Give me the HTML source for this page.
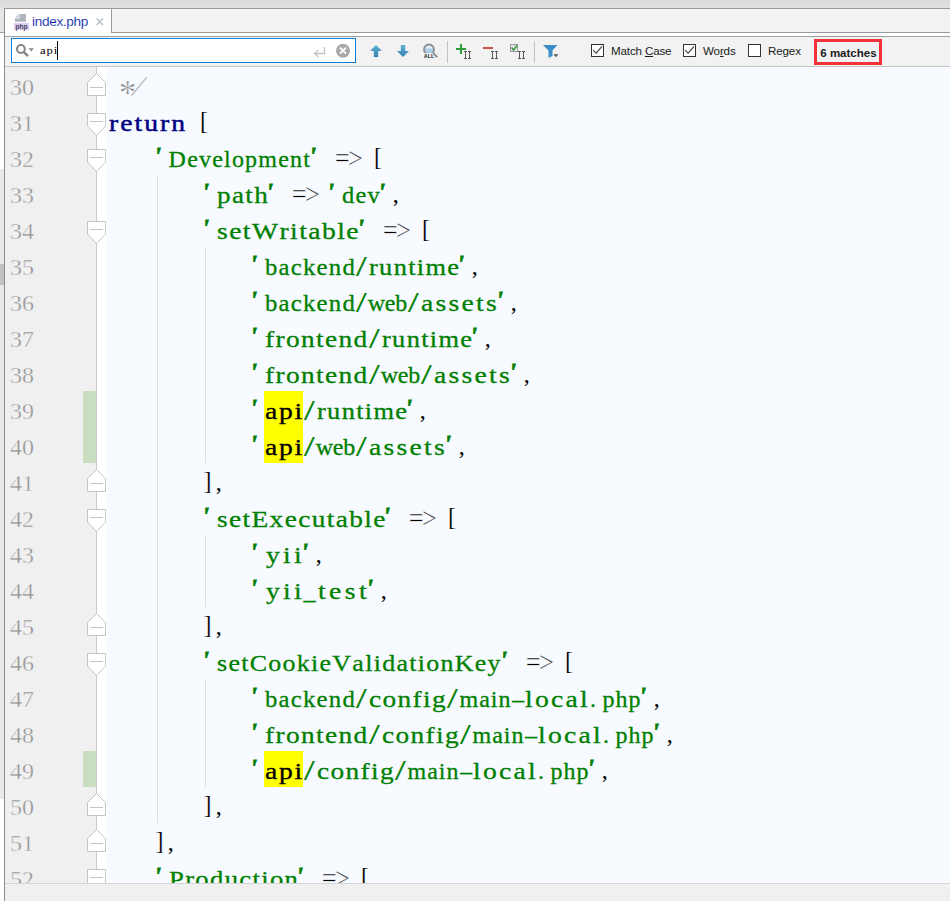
<!DOCTYPE html>
<html lang="en">
<head>
<meta charset="utf-8">
<title>index.php</title>
<style>
html,body{margin:0;padding:0;}
body{width:950px;height:901px;position:relative;overflow:hidden;background:#f7faff;font-family:"Liberation Sans",sans-serif;}
.abs{position:absolute;}
/* top chrome */
#topstrip{left:0;top:0;width:950px;height:8px;background:linear-gradient(#d9d9d9,#e0e0e0);}
#topline{left:4px;top:8px;width:946px;height:1px;background:#9b9b9b;}
#tabrow{left:5px;top:9px;width:945px;height:23px;background:#f2f2f2;}
#leftcol-top{left:0;top:8px;width:4px;height:24px;background:#e6e6e6;}
#leftcol-line{left:0;top:32px;width:4px;height:1px;background:#9b9b9b;}
#leftcol{left:0;top:33px;width:4px;height:868px;background:#ffffff;}
#leftgray{left:0;top:169px;width:4px;height:630px;background:#e8e8e8;}
#leftthumb{left:0;top:264px;width:4px;height:21px;background:#c2c2c2;}
#vline{left:4px;top:8px;width:1px;height:893px;background:#8c8c8c;}
#tab{left:5px;top:9px;width:106px;height:27px;background:#ffffff;}
#tabright{left:111px;top:8px;width:1px;height:25px;background:#9b9b9b;}
#tabline{left:111px;top:32px;width:839px;height:1px;background:#9b9b9b;}
#tabstrip{left:5px;top:33px;width:945px;height:3px;background:#ffffff;}
#tabline2{left:5px;top:36px;width:945px;height:1px;background:#a0a0a0;}
#tabtext{left:32px;top:12px;font-size:13.6px;letter-spacing:-0.33px;-webkit-text-stroke:0.12px #ffffff;line-height:20px;color:#0a1ea8;white-space:nowrap;}
/* search bar */
#searchbar{left:5px;top:37px;width:945px;height:29px;background:#f2f2f2;}
#searchline{left:5px;top:66px;width:945px;height:1px;background:#c6c6c6;}
#field{left:11px;top:38px;width:343px;height:23px;border:1px solid #0d7fd8;background:#fff;}
#query{left:40px;top:43px;font-family:"Liberation Serif",serif;font-size:11px;line-height:14px;letter-spacing:0.74px;transform:scaleX(1.15);transform-origin:0 0;color:#000;white-space:nowrap;font-kerning:none;}
#caret{left:57px;top:41px;width:1px;height:19px;background:#000;}
.sep{top:41px;width:1px;height:22px;background:#c3c3c3;}
.cb{top:44px;width:11px;height:11px;border:1px solid #333;background:#fff;}
.lbl{top:43px;font-size:11.6px;letter-spacing:-0.15px;line-height:16px;color:#1a1a1a;white-space:nowrap;}
.lbl u{text-decoration:underline;text-underline-offset:1px;}
#matches{left:814px;top:39px;width:62px;height:20px;border:3px solid #f4303a;}
#matchtext{left:820.3px;top:45px;font-size:11.5px;line-height:16px;font-weight:bold;color:#1a1a1a;white-space:nowrap;}
/* editor */
#gutter{left:5px;top:67px;width:91px;height:816px;background:#f0f0f0;}
#foldstrip{left:96px;top:67px;width:11px;height:816px;background:#ffffff;}
#foldline{left:96px;top:67px;width:1px;height:816px;background:#c9c9c9;}
#code{left:107px;top:67px;width:843px;height:816px;background:#f7faff;}
.num{position:absolute;left:10px;-webkit-text-stroke:0.45px #f0f0f0;margin-top:2px;width:40px;height:36px;line-height:36px;font-family:"Liberation Serif",serif;font-size:24px;color:#8e8e8e;white-space:pre;}
.vcs{position:absolute;left:83px;width:13px;background:#c9dec1;}
.guide{position:absolute;width:1px;background:#dddee1;}
.ln{position:absolute;left:108px;width:842px;height:36px;line-height:36px;font-family:"Liberation Serif",serif;font-size:24px;white-space:pre;font-kerning:none;font-variant-ligatures:none;}
.s{display:inline-block;height:36px;vertical-align:top;overflow:hidden;}
.t{display:inline-block;position:relative;top:2px;height:36px;line-height:36px;vertical-align:top;white-space:pre;}
.st{color:#008000;-webkit-text-stroke:0.3px #008000;}
.kw{color:#000080;-webkit-text-stroke:0.45px #000080;}
.hl{color:#000000;-webkit-text-stroke:0.35px #000000;}
.q{top:-2px;font-weight:bold;font-style:italic;-webkit-text-stroke-width:0.85px;}
.sl{transform:scale(1.6,1.22);transform-origin:3.3px 62%;-webkit-text-stroke-width:0.2px;}
.ast{top:8px;transform:scale(1.45,1.45);transform-origin:6px 50%;-webkit-text-stroke:0.5px #f7faff;}
.w{transform-origin:0 0;}
.cm.sl{transform:scale(1.9,1.25);-webkit-text-stroke:0.55px #f7faff;}
.op{color:#000000;}
.br{top:-0.5px;transform:scale(1,1.07);transform-origin:50% 60%;-webkit-text-stroke:0.12px #f7faff;}
.cma{top:1px;}
.hy{transform:scale(1.9,0.75);transform-origin:4px 62%;}
.ar{margin-left:0.3px;margin-right:-0.3px;transform:scale(1.1,1.25);transform-origin:50% 56%;-webkit-text-stroke:0.4px #f7faff;}
.cm{color:#858585;font-style:italic;-webkit-text-stroke:0.3px #f7faff;}
.hlbg{display:inline-block;height:36px;vertical-align:top;background:#ffff00;}
#bottomline{left:5px;top:883px;width:945px;height:1px;background:#d4d4d4;}
#bottombar{left:5px;top:884px;width:945px;height:17px;background:#f0f0f0;}
svg{position:absolute;left:0;top:0;overflow:visible;}
</style>
</head>
<body>
<!-- editor area -->
<div id="code" class="abs"></div>
<div id="gutter" class="abs"></div>
<div id="foldstrip" class="abs"></div>
<div class="vcs" style="top:391px;height:72px"></div>
<div class="vcs" style="top:751px;height:36px"></div>
<div id="foldline" class="abs"></div>
<div class="guide" style="left:157px;top:175px;height:648px"></div>
<div class="guide" style="left:205px;top:247px;height:216px"></div>
<div class="guide" style="left:205px;top:535px;height:72px"></div>
<div class="guide" style="left:205px;top:679px;height:108px"></div>
<div class="num" style="top:67px">30</div>
<div class="num" style="top:103px">31</div>
<div class="num" style="top:139px">32</div>
<div class="num" style="top:175px">33</div>
<div class="num" style="top:211px">34</div>
<div class="num" style="top:247px">35</div>
<div class="num" style="top:283px">36</div>
<div class="num" style="top:319px">37</div>
<div class="num" style="top:355px">38</div>
<div class="num" style="top:391px">39</div>
<div class="num" style="top:427px">40</div>
<div class="num" style="top:463px">41</div>
<div class="num" style="top:499px">42</div>
<div class="num" style="top:535px">43</div>
<div class="num" style="top:571px">44</div>
<div class="num" style="top:607px">45</div>
<div class="num" style="top:643px">46</div>
<div class="num" style="top:679px">47</div>
<div class="num" style="top:715px">48</div>
<div class="num" style="top:751px">49</div>
<div class="num" style="top:787px">50</div>
<div class="num" style="top:823px">51</div>
<div class="num" style="top:859px">52</div>
<svg width="950" height="901" viewBox="0 0 950 901" fill="#ffffff" stroke="#c4c4c4" stroke-width="1">
<path d="M96.5 73.5L105.5 82.5V95.5H87.5V82.5Z"/><path d="M90 87.5H103"/>
<path d="M87.5 113.5H105.5V126L96.5 135.5L87.5 126Z"/><path d="M90 121.5H103"/>
<path d="M87.5 149.5H105.5V162L96.5 171.5L87.5 162Z"/><path d="M90 157.5H103"/>
<path d="M87.5 221.5H105.5V234L96.5 243.5L87.5 234Z"/><path d="M90 229.5H103"/>
<path d="M96.5 469.5L105.5 478.5V491.5H87.5V478.5Z"/><path d="M90 483.5H103"/>
<path d="M87.5 509.5H105.5V522L96.5 531.5L87.5 522Z"/><path d="M90 517.5H103"/>
<path d="M96.5 613.5L105.5 622.5V635.5H87.5V622.5Z"/><path d="M90 627.5H103"/>
<path d="M87.5 653.5H105.5V666L96.5 675.5L87.5 666Z"/><path d="M90 661.5H103"/>
<path d="M96.5 793.5L105.5 802.5V815.5H87.5V802.5Z"/><path d="M90 807.5H103"/>
<path d="M96.5 829.5L105.5 838.5V851.5H87.5V838.5Z"/><path d="M90 843.5H103"/>
<path d="M87.5 869.5H105.5V882L96.5 891.5L87.5 882Z"/><path d="M90 877.5H103"/>
</svg>
<div class="ln" style="top:67px"><span class="s" style="width:12px"> </span><span class="t cm ast" style="width:12px;left:0px">*</span><span class="t cm sl" style="width:12px;left:2.67px">/</span></div>
<div class="ln" style="top:103px"><span class="t w kw" style="width:78px;left:1.01px;letter-spacing:1.75px;transform:scaleX(1.15)">return</span><span class="s" style="width:12px"> </span><span class="t op br" style="width:12px;left:2px">[</span></div>
<div class="ln" style="top:139px"><span class="s" style="width:48px">    </span><span class="t st q" style="width:12px;left:-1.8px">'</span><span class="t w st" style="width:143px;left:0.6px;letter-spacing:1.2px;transform:scaleX(1)">Development</span><span class="t st q" style="width:13px;left:-1.8px">'</span><span class="s" style="width:12px"> </span><span class="t ar op" style="width:24px;left:-0.77px;letter-spacing:-1.54px">=&gt;</span><span class="s" style="width:12px"> </span><span class="t op br" style="width:12px;left:2px">[</span></div>
<div class="ln" style="top:175px"><span class="s" style="width:96px">        </span><span class="t st q" style="width:12px;left:-1.8px">'</span><span class="t w st" style="width:52px;left:0.68px;letter-spacing:1.2px;transform:scaleX(1.13)">path</span><span class="t st q" style="width:13px;left:-1.8px">'</span><span class="s" style="width:12px"> </span><span class="t ar op" style="width:24px;left:-0.77px;letter-spacing:-1.54px">=&gt;</span><span class="s" style="width:12px"> </span><span class="t st q" style="width:12px;left:-1.8px">'</span><span class="t w st" style="width:39px;left:0.61px;letter-spacing:1.2px;transform:scaleX(1.02)">dev</span><span class="t st q" style="width:13px;left:-1.8px">'</span><span class="t op cma" style="width:12px;left:-0.3px">,</span></div>
<div class="ln" style="top:211px"><span class="s" style="width:96px">        </span><span class="t st q" style="width:12px;left:-1.8px">'</span><span class="t w st" style="width:143px;left:0.72px;letter-spacing:1.25px;transform:scaleX(1.15)">setWritable</span><span class="t st q" style="width:13px;left:-1.8px">'</span><span class="s" style="width:12px"> </span><span class="t ar op" style="width:24px;left:-0.77px;letter-spacing:-1.54px">=&gt;</span><span class="s" style="width:12px"> </span><span class="t op br" style="width:12px;left:2px">[</span></div>
<div class="ln" style="top:247px"><span class="s" style="width:144px">            </span><span class="t st q" style="width:12px;left:-1.8px">'</span><span class="t w st" style="width:91px;left:0.62px;letter-spacing:1.2px;transform:scaleX(1.03)">backend</span><span class="t st sl" style="width:13px;left:3.17px">/</span><span class="t w st" style="width:91px;left:0.66px;letter-spacing:1.2px;transform:scaleX(1.1)">runtime</span><span class="t st q" style="width:13px;left:-1.8px">'</span><span class="t op cma" style="width:12px;left:-0.3px">,</span></div>
<div class="ln" style="top:283px"><span class="s" style="width:144px">            </span><span class="t st q" style="width:12px;left:-1.8px">'</span><span class="t w st" style="width:91px;left:0.62px;letter-spacing:1.2px;transform:scaleX(1.03)">backend</span><span class="t st sl" style="width:13px;left:3.17px">/</span><span class="t w st" style="width:39px;left:-0.16px;letter-spacing:-0.33px">web</span><span class="t st sl" style="width:13px;left:3.17px">/</span><span class="t w st" style="width:78px;left:1.13px;letter-spacing:1.97px;transform:scaleX(1.15)">assets</span><span class="t st q" style="width:13px;left:-1.8px">'</span><span class="t op cma" style="width:12px;left:-0.3px">,</span></div>
<div class="ln" style="top:319px"><span class="s" style="width:144px">            </span><span class="t st q" style="width:12px;left:-1.8px">'</span><span class="t w st" style="width:104px;left:0.69px;letter-spacing:1.2px;transform:scaleX(1.14)">frontend</span><span class="t st sl" style="width:13px;left:3.17px">/</span><span class="t w st" style="width:91px;left:0.66px;letter-spacing:1.2px;transform:scaleX(1.1)">runtime</span><span class="t st q" style="width:13px;left:-1.8px">'</span><span class="t op cma" style="width:12px;left:-0.3px">,</span></div>
<div class="ln" style="top:355px"><span class="s" style="width:144px">            </span><span class="t st q" style="width:12px;left:-1.8px">'</span><span class="t w st" style="width:104px;left:0.69px;letter-spacing:1.2px;transform:scaleX(1.14)">frontend</span><span class="t st sl" style="width:13px;left:3.17px">/</span><span class="t w st" style="width:39px;left:-0.16px;letter-spacing:-0.33px">web</span><span class="t st sl" style="width:13px;left:3.17px">/</span><span class="t w st" style="width:78px;left:1.13px;letter-spacing:1.97px;transform:scaleX(1.15)">assets</span><span class="t st q" style="width:13px;left:-1.8px">'</span><span class="t op cma" style="width:12px;left:-0.3px">,</span></div>
<div class="ln" style="top:391px"><span class="s" style="width:144px">            </span><span class="t st q" style="width:12px;left:-1.8px">'</span><span class="hlbg" style="width:39px"><span class="t w hl" style="width:39px;left:0.88px;letter-spacing:1.53px;transform:scaleX(1.15)">api</span></span><span class="t st sl" style="width:13px;left:3.17px">/</span><span class="t w st" style="width:91px;left:0.66px;letter-spacing:1.2px;transform:scaleX(1.1)">runtime</span><span class="t st q" style="width:13px;left:-1.8px">'</span><span class="t op cma" style="width:12px;left:-0.3px">,</span></div>
<div class="ln" style="top:427px"><span class="s" style="width:144px">            </span><span class="t st q" style="width:12px;left:-1.8px">'</span><span class="hlbg" style="width:39px"><span class="t w hl" style="width:39px;left:0.88px;letter-spacing:1.53px;transform:scaleX(1.15)">api</span></span><span class="t st sl" style="width:13px;left:3.17px">/</span><span class="t w st" style="width:39px;left:-0.16px;letter-spacing:-0.33px">web</span><span class="t st sl" style="width:13px;left:3.17px">/</span><span class="t w st" style="width:78px;left:1.13px;letter-spacing:1.97px;transform:scaleX(1.15)">assets</span><span class="t st q" style="width:13px;left:-1.8px">'</span><span class="t op cma" style="width:12px;left:-0.3px">,</span></div>
<div class="ln" style="top:463px"><span class="s" style="width:96px">        </span><span class="t op br" style="width:12px;left:-0.5px">]</span><span class="t op cma" style="width:12px;left:-0.3px">,</span></div>
<div class="ln" style="top:499px"><span class="s" style="width:96px">        </span><span class="t st q" style="width:12px;left:-1.8px">'</span><span class="t w st" style="width:169px;left:0.68px;letter-spacing:1.2px;transform:scaleX(1.14)">setExecutable</span><span class="t st q" style="width:13px;left:-1.8px">'</span><span class="s" style="width:12px"> </span><span class="t ar op" style="width:24px;left:-0.77px;letter-spacing:-1.54px">=&gt;</span><span class="s" style="width:12px"> </span><span class="t op br" style="width:12px;left:2px">[</span></div>
<div class="ln" style="top:535px"><span class="s" style="width:144px">            </span><span class="t st q" style="width:12px;left:-1.8px">'</span><span class="t w st" style="width:39px;left:1.64px;letter-spacing:2.86px;transform:scaleX(1.15)">yii</span><span class="t st q" style="width:13px;left:-1.8px">'</span><span class="t op cma" style="width:12px;left:-0.3px">,</span></div>
<div class="ln" style="top:571px"><span class="s" style="width:144px">            </span><span class="t st q" style="width:12px;left:-1.8px">'</span><span class="t w st" style="width:39px;left:1.64px;letter-spacing:2.86px;transform:scaleX(1.15)">yii</span><span class="t st" style="width:13px;left:0.5px">_</span><span class="t w st" style="width:52px;left:1.71px;letter-spacing:2.97px;transform:scaleX(1.15)">test</span><span class="t st q" style="width:13px;left:-1.8px">'</span><span class="t op cma" style="width:12px;left:-0.3px">,</span></div>
<div class="ln" style="top:607px"><span class="s" style="width:96px">        </span><span class="t op br" style="width:12px;left:-0.5px">]</span><span class="t op cma" style="width:12px;left:-0.3px">,</span></div>
<div class="ln" style="top:643px"><span class="s" style="width:96px">        </span><span class="t st q" style="width:12px;left:-1.8px">'</span><span class="t w st" style="width:286px;left:0.65px;letter-spacing:1.2px;transform:scaleX(1.08)">setCookieValidationKey</span><span class="t st q" style="width:13px;left:-1.8px">'</span><span class="s" style="width:12px"> </span><span class="t ar op" style="width:24px;left:-0.77px;letter-spacing:-1.54px">=&gt;</span><span class="s" style="width:12px"> </span><span class="t op br" style="width:12px;left:2px">[</span></div>
<div class="ln" style="top:679px"><span class="s" style="width:144px">            </span><span class="t st q" style="width:12px;left:-1.8px">'</span><span class="t w st" style="width:91px;left:0.62px;letter-spacing:1.2px;transform:scaleX(1.03)">backend</span><span class="t st sl" style="width:13px;left:3.17px">/</span><span class="t w st" style="width:78px;left:0.68px;letter-spacing:1.2px;transform:scaleX(1.14)">config</span><span class="t st sl" style="width:13px;left:3.17px">/</span><span class="t w st" style="width:52px;left:0.5px;letter-spacing:1px">main</span><span class="t st hy" style="width:13px;left:2.5px">-</span><span class="t w st" style="width:65px;left:1.14px;letter-spacing:1.98px;transform:scaleX(1.15)">local</span><span class="t st" style="width:13px;left:1px">.</span><span class="t w st" style="width:39px;left:0.5px;letter-spacing:1px">php</span><span class="t st q" style="width:13px;left:-1.8px">'</span><span class="t op cma" style="width:12px;left:-0.3px">,</span></div>
<div class="ln" style="top:715px"><span class="s" style="width:144px">            </span><span class="t st q" style="width:12px;left:-1.8px">'</span><span class="t w st" style="width:104px;left:0.69px;letter-spacing:1.2px;transform:scaleX(1.14)">frontend</span><span class="t st sl" style="width:13px;left:3.17px">/</span><span class="t w st" style="width:78px;left:0.68px;letter-spacing:1.2px;transform:scaleX(1.14)">config</span><span class="t st sl" style="width:13px;left:3.17px">/</span><span class="t w st" style="width:52px;left:0.5px;letter-spacing:1px">main</span><span class="t st hy" style="width:13px;left:2.5px">-</span><span class="t w st" style="width:65px;left:1.14px;letter-spacing:1.98px;transform:scaleX(1.15)">local</span><span class="t st" style="width:13px;left:1px">.</span><span class="t w st" style="width:39px;left:0.5px;letter-spacing:1px">php</span><span class="t st q" style="width:13px;left:-1.8px">'</span><span class="t op cma" style="width:12px;left:-0.3px">,</span></div>
<div class="ln" style="top:751px"><span class="s" style="width:144px">            </span><span class="t st q" style="width:12px;left:-1.8px">'</span><span class="hlbg" style="width:39px"><span class="t w hl" style="width:39px;left:0.88px;letter-spacing:1.53px;transform:scaleX(1.15)">api</span></span><span class="t st sl" style="width:13px;left:3.17px">/</span><span class="t w st" style="width:78px;left:0.68px;letter-spacing:1.2px;transform:scaleX(1.14)">config</span><span class="t st sl" style="width:13px;left:3.17px">/</span><span class="t w st" style="width:52px;left:0.5px;letter-spacing:1px">main</span><span class="t st hy" style="width:13px;left:2.5px">-</span><span class="t w st" style="width:65px;left:1.14px;letter-spacing:1.98px;transform:scaleX(1.15)">local</span><span class="t st" style="width:13px;left:1px">.</span><span class="t w st" style="width:39px;left:0.5px;letter-spacing:1px">php</span><span class="t st q" style="width:13px;left:-1.8px">'</span><span class="t op cma" style="width:12px;left:-0.3px">,</span></div>
<div class="ln" style="top:787px"><span class="s" style="width:96px">        </span><span class="t op br" style="width:12px;left:-0.5px">]</span><span class="t op cma" style="width:12px;left:-0.3px">,</span></div>
<div class="ln" style="top:823px"><span class="s" style="width:48px">    </span><span class="t op br" style="width:12px;left:-0.5px">]</span><span class="t op cma" style="width:12px;left:-0.3px">,</span></div>
<div class="ln" style="top:859px"><span class="s" style="width:48px">    </span><span class="t st q" style="width:12px;left:-1.8px">'</span><span class="t w st" style="width:130px;left:0.66px;letter-spacing:1.2px;transform:scaleX(1.11)">Production</span><span class="t st q" style="width:13px;left:-1.8px">'</span><span class="s" style="width:12px"> </span><span class="t ar op" style="width:24px;left:-0.77px;letter-spacing:-1.54px">=&gt;</span><span class="s" style="width:12px"> </span><span class="t op br" style="width:12px;left:2px">[</span></div>
<div id="bottomline" class="abs"></div>
<div id="bottombar" class="abs"></div>

<!-- top chrome -->
<div id="topstrip" class="abs"></div>
<div id="tabrow" class="abs"></div>
<div id="leftcol-top" class="abs"></div>
<div id="leftcol" class="abs"></div>
<div id="leftgray" class="abs"></div>
<div id="leftcol-line" class="abs"></div>
<div id="leftthumb" class="abs"></div>
<div id="topline" class="abs"></div>
<div id="tab" class="abs"></div>
<div id="tabstrip" class="abs"></div>
<div id="tabright" class="abs"></div>
<div id="tabline" class="abs"></div>
<div id="tabline2" class="abs"></div>
<div id="vline" class="abs"></div>
<div id="tabtext" class="abs">index.php</div>

<div id="searchbar" class="abs"></div>
<div id="searchline" class="abs"></div>
<div id="field" class="abs"></div>
<div id="query" class="abs">api</div>
<div id="caret" class="abs"></div>
<div class="abs sep" style="left:447px"></div>
<div class="abs sep" style="left:534px"></div>
<div class="abs cb" style="left:591px"></div>
<div class="abs lbl" style="left:611px">Match <u>C</u>ase</div>
<div class="abs cb" style="left:683px"></div>
<div class="abs lbl" style="left:703px">Wo<u>r</u>ds</div>
<div class="abs cb" style="left:748px"></div>
<div class="abs lbl" style="left:768px">Re<u>g</u>ex</div>
<div id="matches" class="abs"></div>
<div id="matchtext" class="abs">6 matches</div>

<!-- icons -->
<svg width="950" height="901" viewBox="0 0 950 901" fill="none" stroke="none">
  <!-- php file icon -->
  <path d="M19.5 14H25.9V21.8H15V18.4H19.5Z" fill="#a9b4bc"/>
  <path d="M15 17.6L18.7 14V17.6Z" fill="#c0c9cf"/>
  <rect x="14" y="23" width="15" height="7" fill="#dccbf7"/>
  <text x="21.5" y="29.2" font-family="Liberation Sans, sans-serif" font-size="8" font-weight="bold" fill="#4a4452" text-anchor="middle" textLength="12" lengthAdjust="spacingAndGlyphs">php</text>
  <!-- tab close -->
  <path d="M96.5 18.5L103 25M103 18.5L96.5 25" stroke="#b2babf" stroke-width="1.2"/>
  <!-- magnifier -->
  <circle cx="20.9" cy="49" r="3.9" stroke="#848484" stroke-width="2"/>
  <path d="M23.8 52.1L28.1 56.1" stroke="#848484" stroke-width="2.3"/>
  <path d="M28.5 48.3H34L31.25 51.6Z" fill="#8a8a8a"/>
  <!-- enter arrow -->
  <path d="M324.5 47V53.5H314.5M318.5 50L314.5 53.5L318.5 57" stroke="#c2c2c2" stroke-width="1.3"/>
  <!-- clear -->
  <circle cx="343" cy="50.7" r="7" fill="#a9a9a9"/>
  <path d="M340 47.7L346 53.7M346 47.7L340 53.7" stroke="#ffffff" stroke-width="1.8"/>
  <!-- up arrow -->
  <defs><linearGradient id="ag" x1="0" y1="0" x2="0" y2="1"><stop offset="0" stop-color="#5badd3"/><stop offset="1" stop-color="#3585b3"/></linearGradient></defs>
  <path d="M376 45L382 51H378.2V57H373.8V51H370Z" fill="url(#ag)"/>
  <!-- down arrow -->
  <path d="M403 57L409 51H405.2V45H400.8V51H397Z" fill="url(#ag)"/>
  <!-- find all -->
  <circle cx="429" cy="49.5" r="5" stroke="#8f8f8f" stroke-width="1.8" fill="#a9cfea"/>
  <path d="M425.6 48.5A3.5 3.5 0 0 1 432.4 48.5Z" fill="#e9f3fa"/>
  <rect x="423" y="53" width="12" height="5" fill="#f2f2f2"/>
  <path d="M433.2 53.2L437.3 57.3" stroke="#8f8f8f" stroke-width="2"/>
  <text x="429" y="57.6" font-family="Liberation Sans, sans-serif" font-size="5.5" font-weight="bold" fill="#222" text-anchor="middle" textLength="10.5" lengthAdjust="spacingAndGlyphs">ALL</text>
  <!-- plus II -->
  <path d="M461 44V54M456 49H466" stroke="#2e9b3c" stroke-width="2"/>
  <g stroke="#4a4a4a" stroke-width="0.9">
    <path d="M464 51.5H467M464 58.5H467M465.5 51.5V58.5M468 51.5H471M468 58.5H471M469.5 51.5V58.5"/>
    <path d="M491 51.5H494M491 58.5H494M492.5 51.5V58.5M495 51.5H498M495 58.5H498M496.5 51.5V58.5"/>
    <path d="M518 51.5H521M518 58.5H521M519.5 51.5V58.5M522 51.5H525M522 58.5H525M523.5 51.5V58.5"/>
  </g>
  <!-- minus -->
  <path d="M483 48H493" stroke="#c9524c" stroke-width="2"/>
  <!-- checkbox icon -->
  <rect x="510.5" y="44.5" width="7" height="7" stroke="#9a9a9a" fill="#e8e8e8"/>
  <path d="M511.5 47.5L513.5 50L517 45.5" stroke="#2e9b3c" stroke-width="1.5"/>
  <!-- funnel -->
  <path d="M543 45H557.3L552.5 50.5V56L548.5 58V50.5Z" fill="#3b8ec6"/>
  <path d="M553.5 54.3H558.3L555.9 57.2Z" fill="#555"/>
  <!-- checkmarks -->
  <path d="M593.2 50.1L596.1 53.2L602 46.3" stroke="#444" stroke-width="1.2"/>
  <path d="M685.2 50.1L688.1 53.2L694 46.3" stroke="#444" stroke-width="1.2"/>
</svg>
</body>
</html>
